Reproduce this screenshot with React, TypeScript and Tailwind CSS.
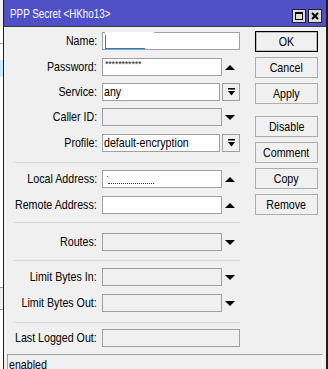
import React from 'react';

// Winbox style "PPP Secret" dialog

const font = "font-['Liberation_Sans',Arial,sans-serif]";

// Winbox draws a tall, narrow dialog font, so squeeze the text horizontally
function Txt({ children, origin }: { children: React.ReactNode; origin: string }) {
  return <span className={`inline-block shrink-0 whitespace-nowrap scale-x-[0.82] ${origin}`}>{children}</span>;
}

function UpArrow() {
  return (
    <div className="flex w-[16px] items-center justify-center">
      <svg width="10" height="5" viewBox="0 0 10 5">
        <path d="M0 5L5 0L10 5Z" fill="#000" />
      </svg>
    </div>
  );
}

function DownArrow() {
  return (
    <div className="flex w-[16px] items-center justify-center">
      <svg width="10" height="5" viewBox="0 0 10 5">
        <path d="M0 0L10 0L5 5Z" fill="#000" />
      </svg>
    </div>
  );
}

function DropButton() {
  return (
    <div className="ml-[2px] flex h-[18px] w-[18px] items-center justify-center border border-[#a0a0a0] bg-[#f0f0f0]">
      <svg width="7" height="8" viewBox="0 0 7 8">
        <rect x="0" y="0" width="7" height="1.5" fill="#000" />
        <path d="M0 3L7 3L3.5 7.5Z" fill="#000" />
      </svg>
    </div>
  );
}

function Row({ label, mt, children }: { label: string; mt: string; children: React.ReactNode }) {
  return (
    <div className={`flex h-[18px] items-center ${mt}`}>
      <div className="flex w-[93px] shrink-0 justify-end leading-[18px]">
        <Txt origin="origin-right">{label}</Txt>
      </div>
      <div className="ml-[5px] flex h-full">{children}</div>
    </div>
  );
}

function Sep({ mt }: { mt: string }) {
  return <div className={`ml-[10px] h-px w-[226px] bg-[#d8d8d8] ${mt}`} />;
}

function Btn({ label, primary, mt }: { label: string; primary?: boolean; mt: string }) {
  return (
    <div
      className={`flex h-[21px] w-[63px] items-center justify-center bg-[#f0f0f0] leading-none ${mt} ${
        primary ? 'border border-black shadow-[inset_0_0_0_1px_#bdbdbd]' : 'border border-[#adadad]'
      }`}
    >
      <Txt origin="origin-center">{label}</Txt>
    </div>
  );
}

function Strip() {
  return (
    <div className="flex w-[3px] shrink-0 flex-col bg-white">
      <div className="h-[26px] bg-[#f0f0f0]" />
      <div className="h-[17px]" />
      <div className="h-px bg-[#a0a0a0]" />
      <div className="h-[16px]" />
      <div className="h-[17px] bg-[#cce8ff]" />
      <div className="h-[210px]" />
      <div className="h-px bg-[#a0a0a0]" />
      <div className="h-[21px] bg-[#f0f0f0]" />
      <div className="h-px bg-[#a0a0a0]" />
    </div>
  );
}

export default function App() {
  return (
    <div className={`flex h-[369px] w-[328px] overflow-hidden bg-white text-[13px] text-black ${font}`}>
      <Strip />

      <div className="flex w-[325px] flex-col border-l border-r-2 border-[#1e1e1e] bg-[#f0f0f0]">
        {/* Title bar */}
        <div className="flex h-[27px] shrink-0 items-start border-b border-[#3a3a3a] bg-[#4f50c6] pl-[6px] pr-[4px]">
          <div className="pt-[8px] text-[12px] leading-none text-white">
            <Txt origin="origin-left">PPP Secret &lt;HKho13&gt;</Txt>
          </div>
          <div className="ml-auto mt-[9px] flex gap-[2px]">
            <div className="flex h-[14px] w-[14px] items-center justify-center border border-[#222] bg-[#dcdcdc]">
              <div className="h-[8px] w-[8px] border border-t-2 border-black" />
            </div>
            <div className="flex h-[14px] w-[14px] items-center justify-center border border-[#222] bg-[#dcdcdc]">
              <svg width="8" height="8" viewBox="0 0 8 8">
                <path d="M1 1L7 7M7 1L1 7" stroke="#000" strokeWidth="2" />
              </svg>
            </div>
          </div>
        </div>

        {/* Body */}
        <div className="flex flex-1">
          <div className="flex w-[251px] flex-col">
            <Row label="Name:" mt="mt-[5px]">
              <div className="relative h-[18px] w-[138px] border border-[#a0a0a0] bg-white">
                <div className="absolute left-[2px] top-[-1px] h-[2px] w-[49px] bg-white" />
                <div className="absolute left-[2px] top-[2px] h-[14px] w-[40px] border-b border-l border-[#1a7fd4]" />
              </div>
            </Row>
            <Row label="Password:" mt="mt-[8px]">
              <div className="h-[18px] w-[120px] border border-[#a0a0a0] bg-white pl-[2px] text-[9px] leading-[10px] tracking-[-0.2px] text-[#222]">
                ***********
              </div>
              <UpArrow />
            </Row>
            <Row label="Service:" mt="mt-[7px]">
              <div className="h-[18px] w-[118px] border border-[#a0a0a0] bg-white pl-[1px] leading-[16px]">
                <Txt origin="origin-left">any</Txt>
              </div>
              <DropButton />
            </Row>
            <Row label="Caller ID:" mt="mt-[7px]">
              <div className="h-[18px] w-[120px] border border-[#a0a0a0] bg-[#f0f0f0]" />
              <DownArrow />
            </Row>
            <Row label="Profile:" mt="mt-[8px]">
              <div className="h-[18px] w-[118px] border border-[#a0a0a0] bg-white pl-[1px] leading-[16px]">
                <Txt origin="origin-left">default-encryption</Txt>
              </div>
              <DropButton />
            </Row>

            <Sep mt="mt-[10px]" />

            <Row label="Local Address:" mt="mt-[7px]">
              <div className="relative h-[18px] w-[120px] border border-[#a0a0a0] bg-white">
                <div className="absolute left-[4px] top-[5px] h-px w-px bg-[#d02020]" />
                <div className="absolute left-[5px] top-[12px] h-px w-[46px] border-t border-dotted border-[#333]" />
              </div>
              <UpArrow />
            </Row>
            <Row label="Remote Address:" mt="mt-[8px]">
              <div className="h-[18px] w-[120px] border border-[#a0a0a0] bg-white" />
              <UpArrow />
            </Row>

            <Sep mt="mt-[8px]" />

            <Row label="Routes:" mt="mt-[10px]">
              <div className="h-[18px] w-[120px] border border-[#a0a0a0] bg-[#f0f0f0]" />
              <DownArrow />
            </Row>

            <Sep mt="mt-[9px]" />

            <Row label="Limit Bytes In:" mt="mt-[7px]">
              <div className="h-[18px] w-[120px] border border-[#a0a0a0] bg-[#f0f0f0]" />
              <DownArrow />
            </Row>
            <Row label="Limit Bytes Out:" mt="mt-[8px]">
              <div className="h-[18px] w-[120px] border border-[#a0a0a0] bg-[#f0f0f0]" />
              <DownArrow />
            </Row>

            <Sep mt="mt-[10px]" />

            <Row label="Last Logged Out:" mt="mt-[6px]">
              <div className="h-[18px] w-[138px] border border-[#a0a0a0] bg-[#f0f0f0]" />
            </Row>
          </div>

          {/* Buttons */}
          <div className="flex w-[63px] flex-col pt-[4px]">
            <Btn label="OK" primary mt="mt-0" />
            <Btn label="Cancel" mt="mt-[5px]" />
            <Btn label="Apply" mt="mt-[5px]" />
            <Btn label="Disable" mt="mt-[12px]" />
            <Btn label="Comment" mt="mt-[5px]" />
            <Btn label="Copy" mt="mt-[5px]" />
            <Btn label="Remove" mt="mt-[5px]" />
          </div>
        </div>

        {/* Status bar */}
        <div className="flex h-[15px] shrink-0 pl-[3px]">
          <div className="w-[316px] border-l border-r border-t border-[#a0a0a0] border-r-white pl-[1px] pt-[2px] leading-[15px]">
            <Txt origin="origin-left">enabled</Txt>
          </div>
        </div>
      </div>
    </div>
  );
}
